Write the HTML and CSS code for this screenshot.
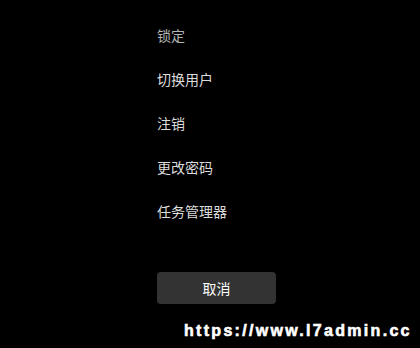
FILE: index.html
```html
<!DOCTYPE html>
<html lang="zh-CN">
<head>
  <meta charset="UTF-8" />
  <title>安全选项</title>
  <link rel="stylesheet" href="styles.css">
</head>
<body>
  <div class="screen">
    <ul class="options">
      <li class="dim">锁定</li>
      <li>切换用户</li>
      <li>注销</li>
      <li>更改密码</li>
      <li>任务管理器</li>
    </ul>
    <button class="cancel">取消</button>
  </div>
  <div class="watermark">https://www.l7admin.cc</div>
</body>
</html>
```

FILE: styles.css
```css
body {
  margin: 0;
  background: #000;
  font-family: "Noto Sans CJK SC", "Noto Sans", sans-serif;
  height: 348px;
  overflow: hidden;
}
.screen {
  padding: 13px 0 0 157px;
}
.options {
  list-style: none;
  margin: 0;
  padding: 0;
}
.options li {
  line-height: 44px;
  height: 44px;
  font-size: 14px;
  color: #dcdcdc;
}
.options li.dim {
  color: #b4b4b4;
}
.cancel {
  display: block;
  margin-top: 39px;
  width: 119px;
  height: 32px;
  background: #333;
  border: none;
  border-radius: 4px;
  color: #fff;
  font-family: inherit;
  font-size: 14px;
  padding: 0;
}
.watermark {
  position: absolute;
  left: 184px;
  top: 322px;
  font-family: "Liberation Sans", Arial, sans-serif;
  font-weight: bold;
  font-size: 16px;
  letter-spacing: 2.3px;
  color: #fff;
  -webkit-text-stroke: 0.6px #fff;
}
```
